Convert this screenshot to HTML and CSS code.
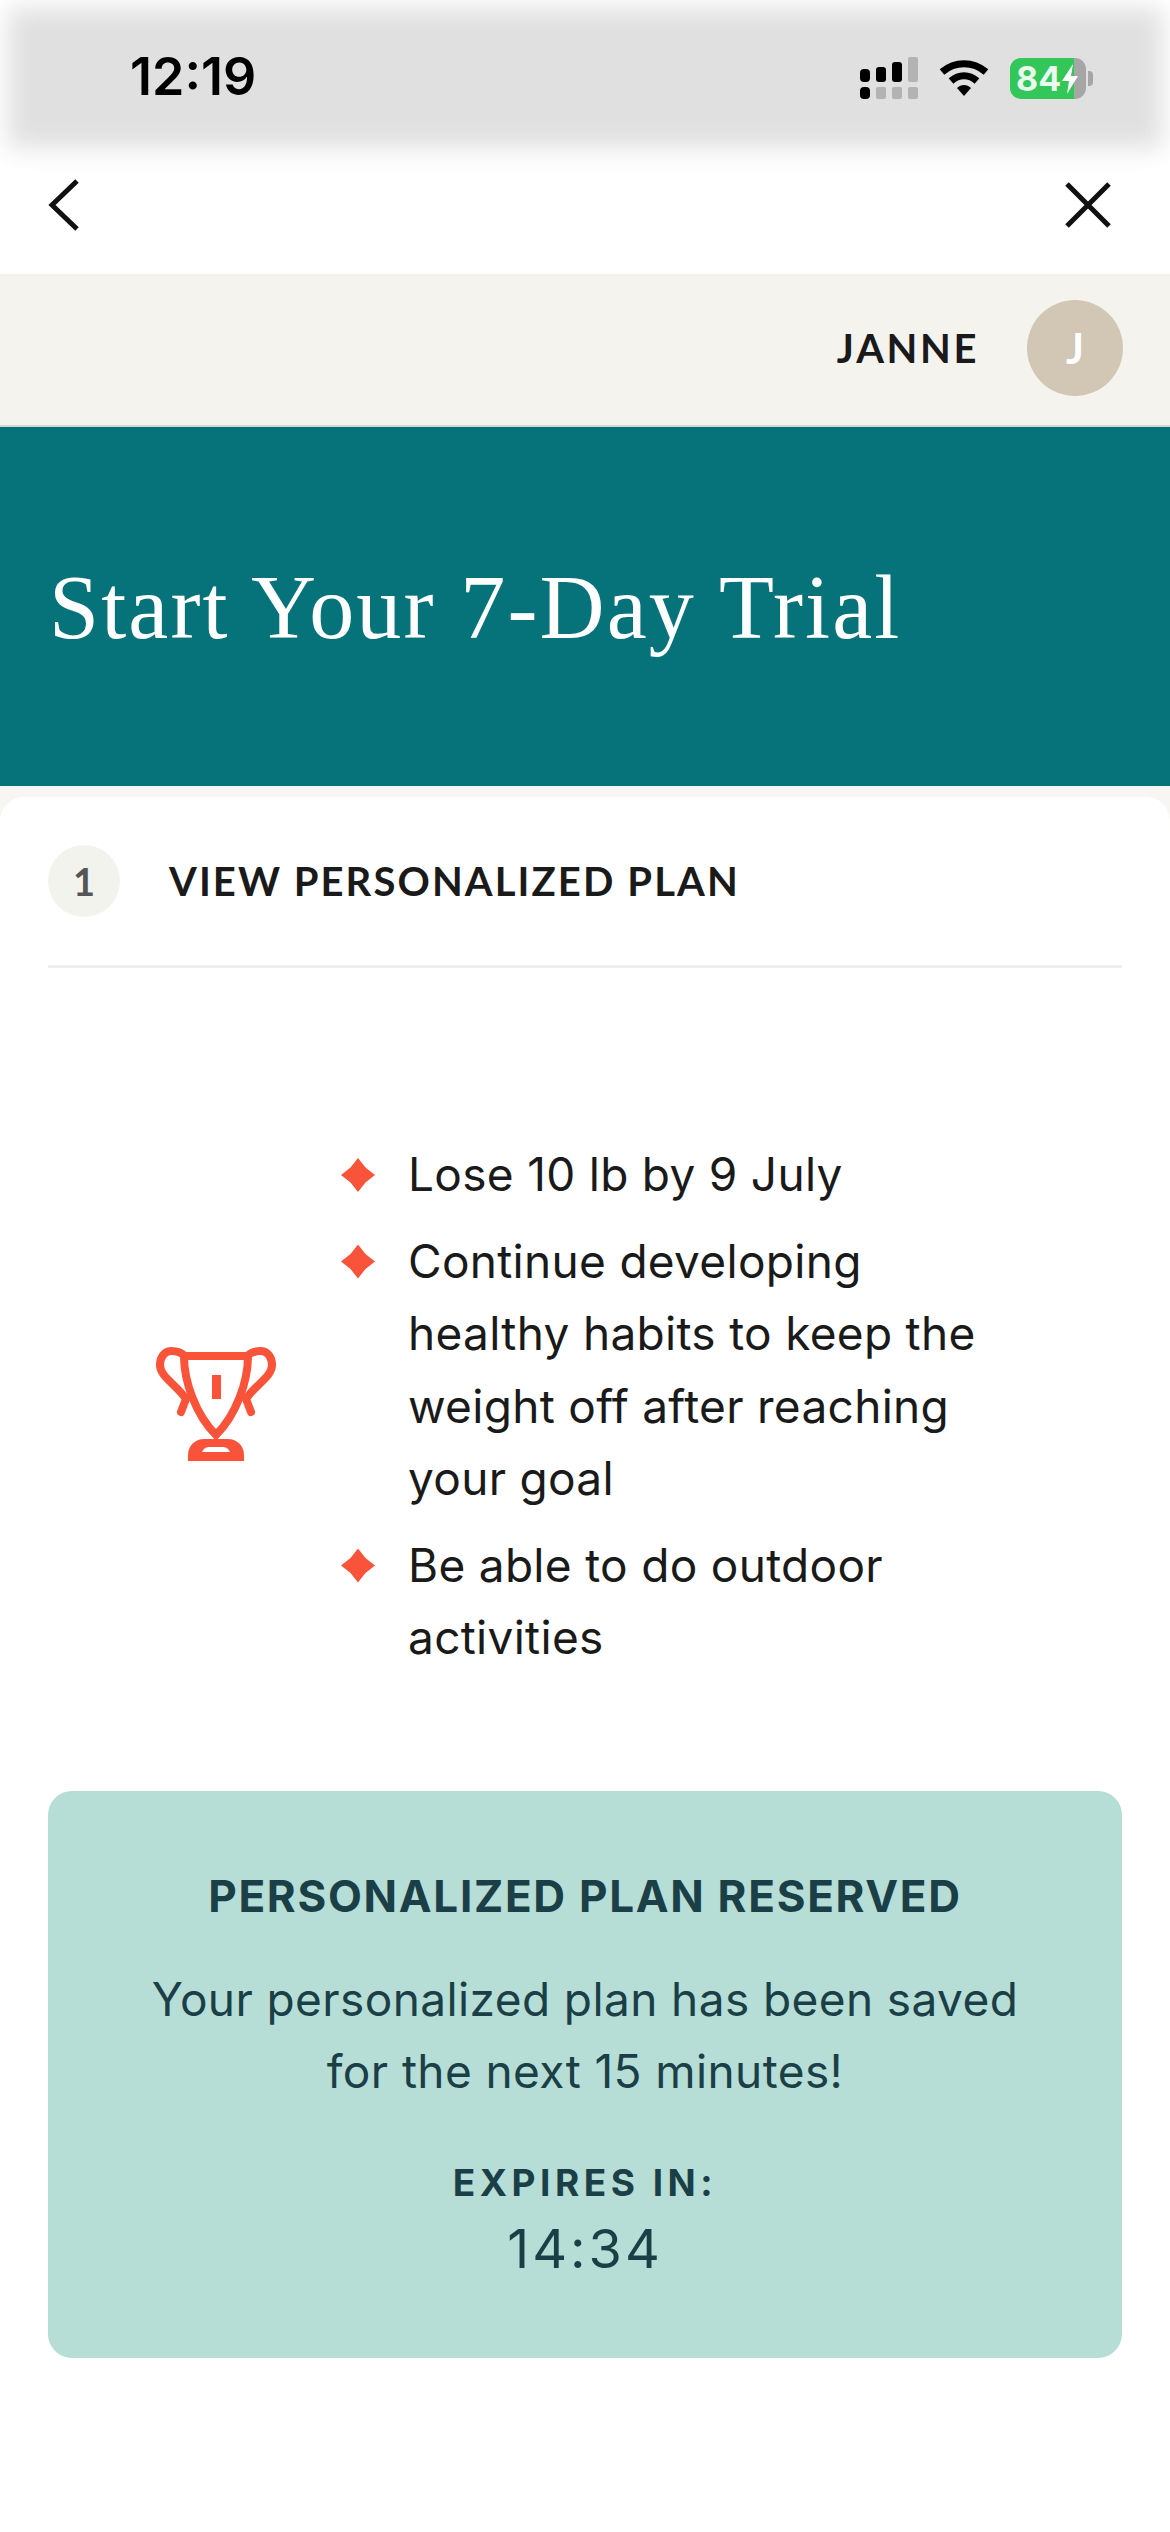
FILE: index.html
```html
<!DOCTYPE html>
<html lang="en">
<head>
<meta charset="utf-8">
<title>Start Your 7-Day Trial</title>
<link rel="stylesheet" href="styles.css">
</head>
<body>
<div class="page">
  <header class="status">
    <span class="time">12:19</span>
    <div class="status-icons">
      <svg class="signal" width="58" height="42" viewBox="0 0 58 42">
        <g fill="#000"><rect x="0" y="12" width="10" height="13" rx="4"/><rect x="0" y="30" width="10" height="12" rx="4"/><rect x="16" y="10" width="10" height="15" rx="3"/><rect x="32" y="5" width="10" height="20" rx="3"/></g>
        <g fill="#b3b3b3"><rect x="16" y="30" width="10" height="12" rx="2"/><rect x="32" y="30" width="10" height="12" rx="2"/><rect x="48" y="0" width="10" height="25" rx="2"/><rect x="48" y="30" width="10" height="12" rx="2"/></g>
      </svg>
      <svg class="wifi" width="50" height="38" viewBox="0 0 50 38">
        <path d="M3 13 C16 2 34 2 47 13" fill="none" stroke="#000" stroke-width="7"/>
        <path d="M12 22 C20 15 30 15 38 22" fill="none" stroke="#000" stroke-width="7"/>
        <path d="M18 29 C22 25 28 25 32 29 L25 37 Z" fill="#000"/>
      </svg>
      <div class="battery"><span class="battery-text">84</span>
        <svg class="bolt" width="18" height="30" viewBox="0 0 18 30"><path d="M12 0 L1 17 H8 L6 30 L17 12 H10 Z" fill="#fff"/></svg>
      </div>
    </div>
  </header>
  <nav class="nav">
    <svg width="34" height="54" viewBox="0 0 34 54"><path d="M30 3 L5 27 L30 51" fill="none" stroke="#111" stroke-width="5"/></svg>
    <svg width="48" height="48" viewBox="0 0 48 48"><path d="M3 3 L45 45 M45 3 L3 45" fill="none" stroke="#111" stroke-width="5"/></svg>
  </nav>
  <div class="account">
    <span class="account-name">JANNE</span>
    <span class="avatar">J</span>
  </div>
  <div class="hero"><h1>Start Your 7-Day Trial</h1></div>
  <div class="card-wrap">
  <main class="card">
    <div class="step">
      <span class="step-num">1</span>
      <span class="step-title">VIEW PERSONALIZED PLAN</span>
    </div>
    <section class="goals">
      <div class="trophy">
        <svg width="120" height="114" viewBox="0 0 120 114">
          <g fill="none" stroke="#f9533a" stroke-width="8">
            <path d="M28 9 H92 C92 35 80 68 60 88 C40 68 28 35 28 9 Z"/>
            <path d="M29 9 C25 5 20 4 15 4 C8 4 4 11 4 18 C4 30 21 38 30 52 L25 65" stroke-linecap="round"/>
            <path d="M91 9 C95 5 100 4 105 4 C112 4 116 11 116 18 C116 30 99 38 90 52 L95 65" stroke-linecap="round"/>
          </g>
          <path d="M32 114 V108 C32 98 40 92 48 92 H72 C80 92 88 98 88 108 V114 Z" fill="#f9533a"/>
          <path d="M46 105 C48 101 50 100 54 100 H66 C70 100 72 101 74 105 Z" fill="#fff"/>
          <rect x="56" y="28" width="9" height="24" fill="#f9533a"/>
        </svg>
      </div>
      <ul class="goal-list">
        <li>Lose 10 lb by 9 July</li>
        <li>Continue developing healthy habits to keep the weight off after reaching your goal</li>
        <li>Be able to do outdoor activities</li>
      </ul>
    </section>
    <section class="reserved">
      <h2>PERSONALIZED PLAN RESERVED</h2>
      <p class="saved">Your personalized plan has been saved<br>for the next 15 minutes!</p>
      <p class="expires">EXPIRES IN:</p>
      <p class="timer">14:34</p>
    </section>
  </main>
  </div>
</div>
</body>
</html>
```

FILE: styles.css
```css
* { box-sizing: border-box; }
html, body { margin: 0; padding: 0; background: #fff; }
body { font-family: "Inter", "Liberation Sans", sans-serif; color: #1a1a1a; }
.page { width: 1170px; height: 2532px; overflow: hidden; background: #fff; }

.status { position: relative; height: 165px; padding: 47px 84px 0 130px; display: flex; justify-content: space-between; align-items: flex-start; background: #fff; }
.status::before { content: ""; position: absolute; left: 8px; right: 8px; top: 8px; height: 140px; background: #e0e0e0; filter: blur(12px); }
.time { position: relative; top: 2px; font-family: "Inter", sans-serif; font-weight: 600; font-size: 52px; line-height: 56px; color: #000; }
.status-icons { position: relative; display: flex; align-items: center; gap: 21px; margin-top: 10px; }
.signal { display: block; }
.wifi { display: block; }
.battery { position: relative; width: 76px; height: 41px; border-radius: 11px; background: linear-gradient(90deg, #33c759 0 64px, #a6a6a6 64px); display: flex; align-items: center; padding-left: 6px; }
.battery::after { content: ""; position: absolute; right: -7px; top: 13px; width: 5px; height: 15px; border-radius: 0 4px 4px 0; background: #a6a6a6; }
.battery-text { font-family: "Inter", sans-serif; font-weight: 700; font-size: 34px; line-height: 41px; color: #e9fbee; }
.bolt { position: absolute; left: 51px; top: 6px; }

.nav { height: 109px; padding: 13px 58px 0 47px; display: flex; justify-content: space-between; align-items: flex-start; background: #fff; }
.nav svg { display: block; }
.nav svg + svg { margin-top: 3px; }

.account { height: 153px; background: #f4f3ee; display: flex; justify-content: flex-end; align-items: center; gap: 48px; padding: 0 47px 3px 0; border-bottom: 2px solid #d9d6cd; }
.account-name { font-family: "Lato", sans-serif; font-weight: 700; font-size: 40px; letter-spacing: 2.6px; color: #1a1a1a; }
.avatar { width: 96px; height: 96px; border-radius: 50%; background: #d2c7b4; color: #fff; font-family: "Lato", sans-serif; font-weight: 700; font-size: 42px; display: flex; align-items: center; justify-content: center; }

.hero { height: 359px; background: #06737a; display: flex; align-items: center; padding: 2px 0 0 49px; }
.hero h1 { margin: 0; font-family: "Liberation Serif", serif; font-weight: 400; font-size: 90px; line-height: 100px; letter-spacing: 2.15px; color: #fff; }

.card-wrap { background: #f7f6f2; padding-top: 11px; }
.card { background: #fff; border-radius: 24px 24px 0 0; padding: 0 48px; height: 1736px; }
.step { height: 171px; display: flex; align-items: center; gap: 49px; border-bottom: 3px solid #eeeeec; }
.step-num { width: 72px; height: 72px; border-radius: 50%; background: #f3f3ee; color: #555; font-family: "Lato", sans-serif; font-weight: 700; font-size: 38px; display: flex; align-items: center; justify-content: center; }
.step-title { font-family: "Lato", sans-serif; font-weight: 700; font-size: 40px; letter-spacing: 2.1px; color: #1a1a1a; }

.goals { display: flex; align-items: center; padding-top: 170px; }
.trophy { width: 360px; flex: none; padding: 0 0 18px 108px; }
.trophy svg { display: block; }
.goal-list { list-style: none; margin: 0; padding: 0; width: 600px; }
.goal-list li { position: relative; font-size: 46px; line-height: 72.5px; letter-spacing: 0.3px; margin-bottom: 14px; color: #1a1a1a; }
.goal-list li::before { content: ""; position: absolute; left: -67px; top: 20px; width: 34px; height: 34px; background: #f9533a; clip-path: polygon(50% 0, 72% 28%, 100% 50%, 72% 72%, 50% 100%, 28% 72%, 0 50%, 28% 28%); }

.reserved { margin-top: 103px; height: 567px; border-radius: 24px; background: #b6ddd6; color: #1b3f47; text-align: center; padding-top: 81px; }
.reserved h2 { margin: 0; font-family: "Inter", sans-serif; font-weight: 700; font-size: 44px; line-height: 48px; letter-spacing: 1.7px; }
.saved { margin: 43px 0 0; font-size: 46px; line-height: 72px; letter-spacing: 0.4px; }
.expires { margin: 54px 0 0; font-family: "Inter", sans-serif; font-weight: 700; font-size: 37px; line-height: 44px; letter-spacing: 4.5px; }
.timer { margin: 13px 0 0; font-size: 54px; line-height: 62px; letter-spacing: 3px; }
```
